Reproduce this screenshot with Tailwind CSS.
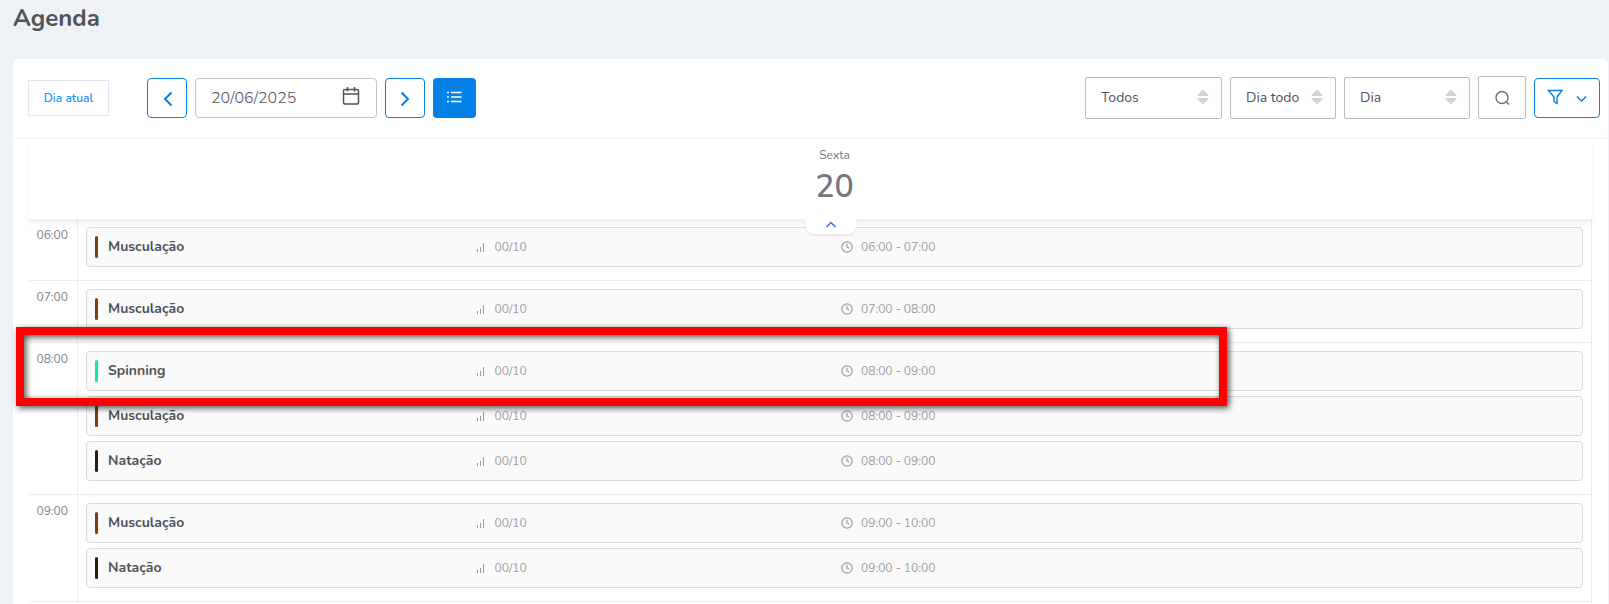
<!DOCTYPE html>
<html lang="pt-BR">
<head>
    <meta charset="UTF-8">
    <meta name="viewport" content="width=device-width, initial-scale=1.0">
    <title>Agenda</title>
    <script src="https://cdn.jsdelivr.net/npm/@tailwindcss/browser@4"></script>
</head>
<body class="h-screen overflow-hidden flex flex-col bg-[#eef1f6] text-[#505357] font-['Nunito','Lato',sans-serif]">

<!-- icons shared by the agenda rows and selects -->
<svg class="hidden">
    <symbol id="signal" viewBox="0 0 12 12">
        <path d="M2.5 8v3M5.500 6v5M8.500 2v9" fill="none" stroke="currentColor"/>
    </symbol>
    <symbol id="clock" viewBox="0 0 12 12">
        <circle cx="6" cy="6" r="5.2" fill="none" stroke="currentColor" stroke-width="1.2"/>
        <path d="M6 2.800V6l2.200 1.300" fill="none" stroke="currentColor" stroke-width="1.200"/>
    </symbol>
    <symbol id="sort" viewBox="0 0 12 14">
        <path d="M5.500 0h1L11.500 5v1H.5V5zM5.500 14h1L11.500 9V8H.5v1z" fill="#d0d2de"/>
    </symbol>
</svg>

<h1 class="pl-[13px] h-[59px] pt-1 text-2xl leading-7 font-bold">Agenda</h1>

<main class="flex-1 flex flex-col ml-[13px] mr-px bg-white rounded-t-md">
    <div class="flex items-center h-20 pl-[15px] pr-2 pb-0.5 border-b border-[#eff0f3] shrink-0">
        <button class="w-[81px] h-9 mr-[38px] border border-[#e2e5f0] text-xs font-semibold text-[#1e90ff]">Dia atual</button>
        <div class="flex gap-2">
            <button aria-label="Dia anterior" class="w-10 h-10 flex items-center justify-center border border-[#0580e6] rounded text-[#0580e6]">
                <svg class="w-4 h-4 mt-0.5" viewBox="0 0 16 16" fill="none" stroke="currentColor" stroke-width="2"><path d="M12.500 1.500L6 8l6.500 6.500"/></svg>
            </button>
            <div class="w-[182px] h-10 flex items-center border border-[#c4c4c4] rounded pl-[15px] pr-4">
                <input type="text" aria-label="Data" value="20/06/2025" class="w-full min-w-0 text-base font-light outline-none">
                <button aria-label="Abrir calendário" class="shrink-0">
                    <svg class="w-[18px] h-5 mb-1" viewBox="0 0 18 20" fill="none" stroke="currentColor" stroke-width="1.5"><rect x="1.500" y="3.500" width="15" height="14.500" rx="1.500"/><path d="M1.500 8h15M5.500 1v4.500M12.500 1v4.500"/></svg>
                </button>
            </div>
            <button aria-label="Próximo dia" class="w-10 h-10 flex items-center justify-center border border-[#0580e6] rounded text-[#0580e6]">
                <svg class="w-4 h-4 mt-0.5" viewBox="0 0 16 16" fill="none" stroke="currentColor" stroke-width="2"><path d="M4.500 1.500L11 8l-6.500 6.500"/></svg>
            </button>
            <button aria-label="Lista" class="w-[43px] h-10 flex items-center justify-center bg-[#0580e6] rounded text-white">
                <svg class="w-4 h-3 mb-0.5 mr-px" viewBox="0 0 16 12" fill="none" stroke="currentColor" stroke-width="1.5"><path d="M5 1.500h10.500M5 6h10.500M5 10.500h10.500M1 1.500h2M1 6h2M1 10.500h2"/></svg>
            </button>
        </div>

        <div class="flex items-center gap-2 ml-auto">
            <div class="relative w-[137px]">
                <select aria-label="Turmas" class="w-full h-[42px] appearance-none border border-[#b9bac8] rounded-xs pl-[15px] text-sm">
                    <option>Todos</option>
                </select>
                <svg class="absolute right-[13px] top-[13px] w-3 h-3.5 pointer-events-none"><use href="#sort"/></svg>
            </div>
            <div class="relative w-[106px]">
                <select aria-label="Período" class="w-full h-[42px] appearance-none border border-[#b9bac8] rounded-xs pl-[15px] text-sm">
                    <option>Dia todo</option>
                </select>
                <svg class="absolute right-[13px] top-[13px] w-3 h-3.5 pointer-events-none"><use href="#sort"/></svg>
            </div>
            <div class="relative w-[126px]">
                <select aria-label="Visualização" class="w-full h-[42px] appearance-none border border-[#b9bac8] rounded-xs pl-[15px] text-sm">
                    <option>Dia</option>
                </select>
                <svg class="absolute right-[13px] top-[13px] w-3 h-3.5 pointer-events-none"><use href="#sort"/></svg>
            </div>
            <button aria-label="Buscar" class="w-12 h-[43px] flex items-center justify-center border border-[#b9bac8] rounded-xs text-[#6b6d78]">
                <svg class="w-4 h-4" viewBox="0 0 16 16" fill="none" stroke="currentColor" stroke-width="1.4"><circle cx="8" cy="7.500" r="6"/><path d="M12 11.500l3 3"/></svg>
            </button>
            <button aria-label="Filtrar" class="w-[66px] h-10 flex items-center justify-center gap-3 border border-[#0580e6] rounded text-[#0580e6]">
                <svg class="w-4 h-4 mb-0.5" viewBox="0 0 16 16" fill="none" stroke="currentColor" stroke-width="1.4"><path d="M1.500 1.500h13.500L10 8v6.500L7 12.500V8z"/></svg>
                <svg class="w-3 h-2 mt-0.5" viewBox="0 0 12 8" fill="none" stroke="currentColor" stroke-width="1.5"><path d="M2 1.500L6.500 6 11 1.500"/></svg>
            </button>
        </div>
    </div>

    <section class="flex-1 flex flex-col px-4">
        <!-- day header -->
        <div class="relative z-10 h-20 flex bg-white shadow-[0_4px_6px_rgba(0,0,0,0.07)] shrink-0">
            <div class="w-12"></div>
            <div class="flex-1 text-center pt-2">
                <p class="text-xs leading-4 text-[#74777f]">Sexta</p>
                <p class="pt-1 text-[32px] leading-10 font-semibold text-[#74777f]">20</p>
            </div>
            <button aria-label="Recolher" class="absolute left-1/2 top-full -ml-[5px] w-[50px] h-[15px] flex items-center justify-center bg-white rounded-b-lg shadow-[0_2px_2px_rgba(0,0,0,0.08)] text-[#3b6fe0]">
                <svg class="w-3 h-2 mb-1" viewBox="0 0 12 8" fill="none" stroke="currentColor" stroke-width="1.5"><path d="M1.500 6L6 1.500 10.500 6"/></svg>
            </button>
        </div>

        <div id="agenda" class="flex-1 flex flex-col border-r border-[#ebecf3]"></div>
    </section>
</main>

<script>
    const brown = '#7b3f12', green = '#0deca4', dark = '#2a1c10';
    const hours = [
        { start: '06:00', end: '07:00', classes: [['Musculação', brown]] },
        { start: '07:00', end: '08:00', classes: [['Musculação', brown]] },
        { start: '08:00', end: '09:00', highlight: true, classes: [['Spinning', green], ['Musculação', brown], ['Natação', dark]] },
        { start: '09:00', end: '10:00', classes: [['Musculação', brown], ['Natação', dark]] },
    ];

    const card = (hour, [name, color]) => `
        <li class="flex items-center gap-2.5 h-10 px-2 border border-[#dadbdc] rounded bg-[#fafafa]">
            <span class="w-[3px] h-[22px] rounded-xs" style="background:${color}"></span>
            <div class="flex-1 grid grid-cols-4 items-center text-xs text-[#9a9ca3]">
                <strong class="text-sm font-bold text-[#505357]">${name}</strong>
                <span class="flex items-center gap-2"><svg class="w-3 h-3"><use href="#signal"/></svg>00/10</span>
                <span class="flex items-center gap-2"><svg class="w-3 h-3"><use href="#clock"/></svg>${hour.start} - ${hour.end}</span>
            </div>
        </li>`;

    document.getElementById('agenda').innerHTML = hours.map(hour => `
        <div class="relative flex border-b border-[#ebecf3]">
            <time class="w-[49px] pt-2 pr-[9px] text-right text-xs leading-4 text-[#7d8087] border-r border-[#ebecf3]">${hour.start}</time>
            <ul class="flex-1 flex flex-col gap-[5px] px-2 pt-2 pb-[13px]">${hour.classes.map(c => card(hour, c)).join('')}</ul>
            ${hour.highlight ? '<div class="absolute z-20 -left-[13px] -top-4 w-[1211px] h-[79px] border-8 border-[#ff0000] drop-shadow-[2px_2px_3px_rgba(0,0,0,0.7)] pointer-events-none"></div>' : ''}
        </div>`).join('') + '<div class="flex-1 w-[49px] border-r border-[#ebecf3]"></div>';
</script>
</body>
</html>
